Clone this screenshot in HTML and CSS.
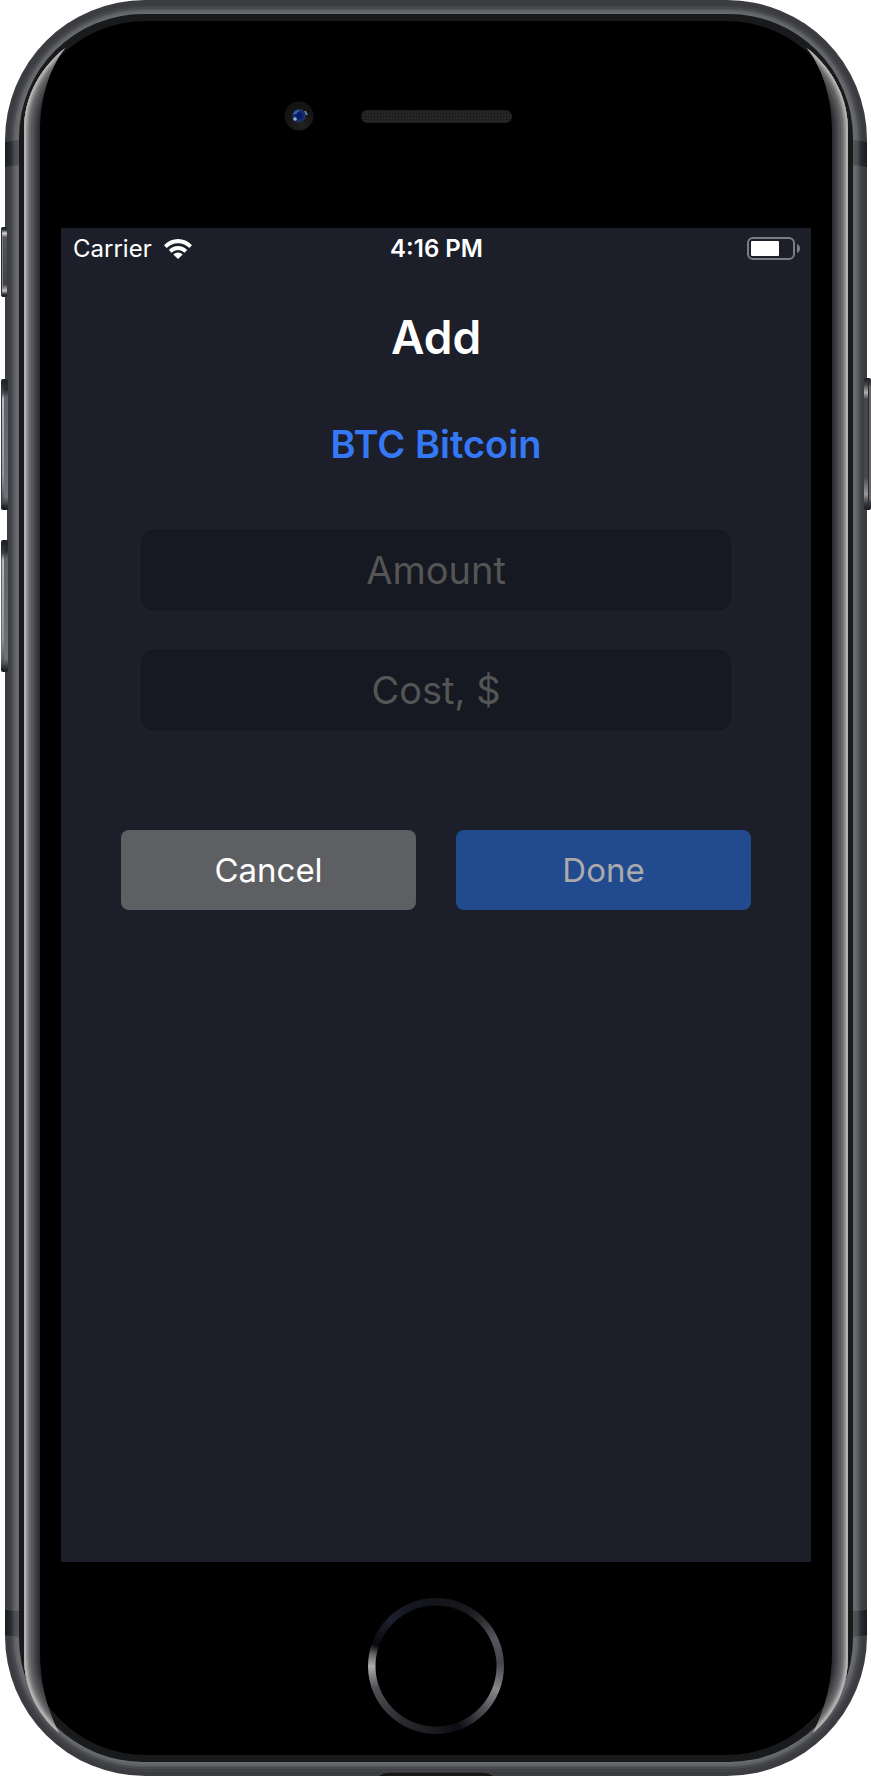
FILE: index.html
```html
<!DOCTYPE html>
<html lang="en">
<head>
<meta charset="utf-8">
<meta name="viewport" content="width=device-width, initial-scale=1">
<title>Add BTC Bitcoin</title>
<link rel="stylesheet" href="styles.css">
</head>
<body>
<div class="phone">
  <svg class="phone-body" viewBox="0 0 871 1777" preserveAspectRatio="none" aria-hidden="true">
    <defs>
      <linearGradient id="band"><stop offset="0" stop-color="#181e24"/><stop offset=".4" stop-color="#252b30"/><stop offset=".7" stop-color="#4b4e51"/><stop offset="1" stop-color="#55575a"/></linearGradient>
      <linearGradient id="key" x2="0" y2="1"><stop offset="0" stop-color="#202226"/><stop offset=".08" stop-color="#292b30"/><stop offset=".14" stop-color="#5e6166"/><stop offset=".9" stop-color="#707277"/><stop offset=".96" stop-color="#35373b"/><stop offset="1" stop-color="#17191d"/></linearGradient>
      <linearGradient id="keyEdge" x2="0" y2="1"><stop offset="0" stop-color="#22242a"/><stop offset=".09" stop-color="#404349"/><stop offset=".14" stop-color="#b5b9bf"/><stop offset=".75" stop-color="#92969c"/><stop offset=".95" stop-color="#4b4e54"/><stop offset="1" stop-color="#17191d"/></linearGradient>
      <linearGradient id="mute" x2="0" y2="1"><stop offset="0" stop-color="#17181c"/><stop offset=".04" stop-color="#2c2d31"/><stop offset=".09" stop-color="#d5d5d8"/><stop offset=".15" stop-color="#55565b"/><stop offset=".82" stop-color="#3f4045"/><stop offset=".91" stop-color="#c0c0c4"/><stop offset=".96" stop-color="#303136"/><stop offset="1" stop-color="#17181c"/></linearGradient>
      <linearGradient id="power" x2="0" y2="1"><stop offset="0" stop-color="#191b1f"/><stop offset=".05" stop-color="#424449"/><stop offset=".11" stop-color="#b0b1b4"/><stop offset=".16" stop-color="#44464b"/><stop offset=".75" stop-color="#45484d"/><stop offset=".88" stop-color="#999a9d"/><stop offset=".95" stop-color="#37393d"/><stop offset="1" stop-color="#17191d"/></linearGradient>
      <radialGradient id="housing" cx=".6" cy=".8"><stop offset="0" stop-color="#222"/><stop offset="1" stop-color="#141414"/></radialGradient>
      <radialGradient id="lens" cx=".5" cy=".48"><stop offset="0" stop-color="#02126a"/><stop offset=".45" stop-color="#0b226c"/><stop offset=".75" stop-color="#1f3460"/><stop offset="1" stop-color="#161b26"/></radialGradient>
      <pattern id="mesh" width="3" height="3" patternUnits="userSpaceOnUse"><rect width="3" height="3" fill="#1e1e1e"/><rect width="2" height="2" fill="#282828"/></pattern>
      <clipPath id="shell"><rect x="5" y="0" width="862" height="1776" rx="140"/></clipPath>
      <clipPath id="glassEdge"><path d="M65 48C36 72 24 101 24 130V1656C24 1686 35 1712 59 1733C45 1705 40 1680 40 1652V132C40 100 48 70 65 48Z"/></clipPath>
      <g id="edge" clip-path="url(#glassEdge)" fill="none">
        <rect x="20" y="40" width="50" height="1700" fill="#2d2e32"/>
        <path class="edge-1" d="M67 46C36 71 24 101 24 130V1656C24 1686 35 1712 60 1734"/>
        <path class="edge-2" d="M67 46C36 71 24 101 24 130V1656C24 1686 35 1712 60 1734"/>
        <path class="edge-3" d="M67 46C36 71 24 101 24 130V1656C24 1686 35 1712 60 1734"/>
        <path class="edge-4" d="M67 46C36 71 24 101 24 130V1656C24 1686 35 1712 60 1734"/>
        <path class="edge-5" d="M67 46C36 71 24 101 24 130V1656C24 1686 35 1712 60 1734"/>
        <path class="edge-6" d="M67 46C36 71 24 101 24 130V1656C24 1686 35 1712 60 1734"/>
        <path class="edge-7" d="M67 46C36 71 24 101 24 130V1656C24 1686 35 1712 60 1734"/>
      </g>
    </defs>
    <rect x="5" y="0" width="862" height="1776" rx="140" fill="#3b3c40"/>
    <rect x="9" y="5" width="854" height="1767" rx="136" fill="#404146"/>
    <rect x="11" y="7" width="850" height="1762" rx="134" fill="#4a4b50"/>
    <rect x="13" y="9" width="846" height="1758" rx="132" fill="#57585c"/>
    <rect x="14" y="10" width="844" height="1756" rx="131" fill="#626367"/>
    <rect x="16" y="12" width="840" height="1752" rx="129" fill="#6a6b6f"/>
    <g clip-path="url(#shell)">
      <path d="M5 142L19 140V165L5 167ZM5 1610L19 1611V1637L5 1635Z" fill="url(#band)"/>
      <path d="M5 142L19 140V165L5 167ZM5 1610L19 1611V1637L5 1635Z" fill="url(#band)" transform="matrix(-1 0 0 1 872 0)"/>
      <rect x="376" y="1772" width="120" height="20" rx="12" fill="#191919" stroke="#4a4a4c"/>
    </g>
    <rect x="19" y="14" width="834" height="1748" rx="124" fill="#191a1b"/>
    <rect x="24" y="21" width="824" height="1734" rx="122" fill="#000"/>
    <use href="#edge"/>
    <use href="#edge" transform="matrix(-1 0 0 1 872 0)"/>
    <path d="M5 510H7V540H5Z" fill="#fff"/>
    <rect x="1" y="227" width="6" height="70" rx="2" fill="url(#mute)"/>
    <path d="M1.500 231V293" stroke="#2a2b2f"/><path d="M2.500 236V288" stroke="#818185"/>
    <rect x="1" y="379" width="7" height="131" rx="2" fill="url(#key)"/>
    <rect x="2" y="381" width="2" height="127" fill="url(#keyEdge)"/>
    <path d="M1.500 388V505M1.500 549V667" stroke="#383b41"/>
    <rect x="1" y="540" width="7" height="132" rx="2" fill="url(#key)"/>
    <rect x="2" y="542" width="2" height="128" fill="url(#keyEdge)"/>
    <rect x="864" y="378" width="7" height="132" rx="2" fill="url(#power)"/>
    <path d="M870 386V500" stroke="#6c6566" stroke-width="2"/><path d="M868.500 382V504" stroke="#28292d"/>
    <circle cx="299" cy="116" r="14.500" fill="url(#housing)"/>
    <circle cx="299" cy="116" r="7.500" fill="url(#lens)"/>
    <path d="M293 114Q295 110 300 110L296 114Z" fill="#3c62b8"/>
    <circle cx="295" cy="119" r="1.800" fill="#9db4d8"/><path d="M305 111L307 115" stroke="#6f9cc4" stroke-width="1.500"/>
    <rect x="361" y="110" width="151" height="13" rx="6.500" fill="url(#mesh)"/>
  </svg>

  <main class="screen">
    <div class="status">
      <div class="status-left">
        <span>Carrier</span>
        <svg class="wifi" viewBox="0 0 28 20" aria-hidden="true">
          <path d="M0 6.200Q6 0 14 0T28 6.200L25.300 9Q20.500 4.200 14 4.200T2.700 9Z"/>
          <path d="M4.800 10.900Q8.700 7 14 7T23.200 10.900L20.500 13.700Q17.800 11 14 11T7.500 13.700Z"/>
          <path d="M9.300 15.500Q11.300 13.600 14 13.600T18.700 15.500L14 20Z"/>
        </svg>
      </div>
      <time class="status-time">4:16 PM</time>
      <svg class="battery" viewBox="0 0 53 23" aria-hidden="true">
        <rect x="1" y="1" width="46" height="21" rx="5" fill="none" stroke="#797c85" stroke-width="2"/>
        <rect x="4" y="4" width="28" height="15" rx="1" fill="#fff"/>
        <path d="M50 7Q53 8.500 53 11.500T50 16Z" fill="#797c85"/>
      </svg>
    </div>
    <h1 class="title">Add</h1>
    <h2 class="coin">BTC Bitcoin</h2>
    <form class="form">
      <div class="fields">
        <input class="field" type="text" inputmode="decimal" placeholder="Amount" aria-label="Amount">
        <input class="field" type="text" inputmode="decimal" placeholder="Cost, $" aria-label="Cost in dollars">
      </div>
      <div class="actions">
        <button class="action cancel" type="button">Cancel</button>
        <button class="action done" type="submit" disabled>Done</button>
      </div>
    </form>
  </main>
  <button class="home" type="button" aria-label="Home"></button>
</div>
</body>
</html>
```
FILE: styles.css
```css
* {
  box-sizing: border-box;
}

body {
  margin: 0;
  background: #fff;
  font-family: Inter, "Liberation Sans", sans-serif;
  color: #fff;
}

.phone {
  position: relative;
  display: flex;
  flex-direction: column;
  align-items: center;
  padding: 228px 60px 43px 61px;
}

.phone-body {
  position: absolute;
  inset: 0;
  z-index: -1;
  width: 100%;
  height: 100%;
}

.edge-1 { stroke: #38393d; stroke-width: 28px; }
.edge-2 { stroke: #47484c; stroke-width: 24px; }
.edge-3 { stroke: #57585b; stroke-width: 19px; }
.edge-4 { stroke: #68696b; stroke-width: 14px; }
.edge-5 { stroke: #7d7d7e; stroke-width: 10px; }
.edge-6 { stroke: #969695; stroke-width: 7px; }
.edge-7 { stroke: #b3b2b0; stroke-width: 4px; }

.screen {
  width: 100%;
  aspect-ratio: 750 / 1334;
  background: #1c1f2a;
}

.status {
  display: grid;
  grid-template-columns: 1fr auto 1fr;
  align-items: center;
  height: 41px;
  padding: 0 11px 0 12px;
  font-size: 24px;
  line-height: 41px;
}

.status-left {
  display: flex;
  align-items: center;
  gap: 12px;
}

.wifi {
  width: 28px;
  height: 20px;
  fill: #fff;
}

.status-time {
  font-weight: 600;
}

.battery {
  justify-self: end;
  width: 53px;
  height: 23px;
}

.title {
  margin: 38px 0 0;
  font-size: 46px;
  font-weight: 600;
  line-height: 60px;
  text-align: center;
}

.coin {
  margin: 53px 0 0;
  font-size: 38px;
  font-weight: 600;
  line-height: 48px;
  text-align: center;
  color: #3478f6;
}

.form {
  padding: 62px 60px 0;
}

.fields {
  display: flex;
  flex-direction: column;
  gap: 40px;
  padding: 0 20px;
}

.field {
  width: 100%;
  height: 80px;
  padding: 0 16px;
  border: 1px solid #131620;
  border-radius: 12px;
  background: #161922;
  font: inherit;
  font-size: 38px;
  text-align: center;
  color: #fff;
}

.field::placeholder {
  color: #555;
  opacity: 1;
}

.actions {
  display: flex;
  gap: 40px;
  margin-top: 100px;
}

.action {
  flex: 1;
  height: 80px;
  padding: 0;
  border: 0;
  border-radius: 8px;
  font: inherit;
  font-size: 33px;
}

.cancel {
  background: #5e5f63;
  color: #fff;
}

.done {
  background: #224b8f;
  color: #aaa;
}

.home {
  width: 136px;
  height: 136px;
  margin-top: 36px;
  padding: 0;
  border: 0;
  border-radius: 50%;
  background:
    radial-gradient(circle, #000 60px, transparent 61px),
    conic-gradient(#14151b 0deg, #18181d 30deg, #2b2b30 45deg, #55565c 65deg, #45454e 88deg, #88898c 111deg, #505154 132deg, #0b0c13 160deg, #1a1a1e 180deg, #2c2d31 215deg, #505155 250deg, #acacac 270deg, #606063 281deg, #08080c 289deg, #1c1f2f 315deg, #14151f 340deg, #14151b 360deg);
}
```
